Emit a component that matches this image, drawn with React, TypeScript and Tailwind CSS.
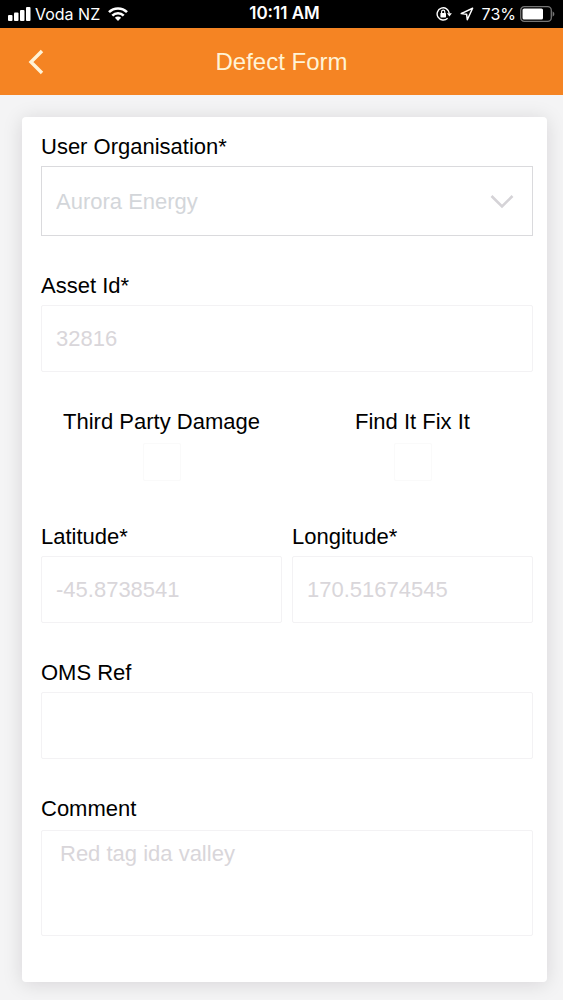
import type { ReactNode } from "react";

const fieldClass =
    "block w-full rounded-xs border border-[#f3f2f4] bg-white px-3.5 text-[22px] text-[#d9d6da] outline-none";

type FieldProps = {
    id: string;
    label: string;
    children: ReactNode;
};

const Field = ({ id, label, children }: FieldProps) => (
    <div className="flex min-w-0 flex-col gap-1">
        <label htmlFor={id} className="text-[22px] leading-[30px] text-black">
            {label}
        </label>
        {children}
    </div>
);

const TextField = ({ id, label, value = "" }: { id: string; label: string; value?: string }) => (
    <Field id={id} label={label}>
        <input id={id} type="text" defaultValue={value} className={`${fieldClass} h-[67px]`} />
    </Field>
);

const CheckField = ({ id, label }: { id: string; label: string }) => (
    <div className="flex flex-col items-center gap-1.5 pb-1.5">
        <label htmlFor={id} className="text-[22px] leading-[30px] text-black">
            {label}
        </label>
        <input
            id={id}
            type="checkbox"
            className="size-[38px] appearance-none rounded-xs border border-[#fafafa] bg-white checked:bg-[#f58423]"
        />
    </div>
);

const StatusBar = () => (
    <div className="grid h-7 grid-cols-[1fr_auto_1fr] items-center bg-black px-2 font-['Inter',sans-serif] text-base text-white">
        <div className="flex items-center gap-1">
            {/* Signal bars */}
            <svg width="23" height="14" viewBox="0 0 23 14" fill="currentColor" aria-hidden="true">
                <rect x="0" y="8" width="4.5" height="6" rx="1" />
                <rect x="6" y="5.5" width="4.5" height="8.5" rx="1" />
                <rect x="12" y="3" width="4.5" height="11" rx="1" />
                <rect x="18" y="0" width="4.5" height="14" rx="1" />
            </svg>
            <span>Voda NZ</span>
            {/* Wifi */}
            <svg className="ml-1" width="20" height="14" viewBox="0 0 20 14" fill="none" stroke="currentColor" strokeWidth="2.6" aria-hidden="true">
                <path d="M1 5.2a12.7 12.7 0 0 1 18 0" />
                <path d="M4.3 8.6a8.1 8.1 0 0 1 11.4 0" />
                <path d="M10 14 6.9 10.8a4.4 4.4 0 0 1 6.2 0z" fill="currentColor" stroke="none" />
            </svg>
        </div>
        <span className="pl-1.5 text-[17px] font-semibold">10:11 AM</span>
        <div className="flex items-center justify-end">
            {/* Rotation lock */}
            <svg width="16" height="16" viewBox="0 0 16 16" fill="none" stroke="currentColor" strokeWidth="1.4" aria-hidden="true">
                <path d="M11.6 12.2A6.1 6.1 0 1 1 13.3 7.400" />
                <path d="M10.900 7.200h5l-2.500 3.200z" fill="currentColor" stroke="none" />
                <rect x="4.4" y="7" width="5.6" height="4.4" rx=".6" fill="currentColor" stroke="none" />
                <path d="M5.6 7.3V5.7a1.6 1.6 0 0 1 3.2 0v1.6" strokeWidth="1.2" />
            </svg>
            {/* Location arrow */}
            <svg className="ml-2" width="14" height="14" viewBox="0 0 14 14" fill="none" stroke="currentColor" strokeWidth="1.5" strokeLinejoin="round" aria-hidden="true">
                <path d="M12.6 1.3 1.2 6.6l5.4.6.7 5.5z" />
            </svg>
            <span className="ml-2">73%</span>
            {/* Battery */}
            <svg className="ml-1" width="35" height="16" viewBox="0 0 35 16" fill="none" aria-hidden="true">
                <rect x=".7" y=".7" width="30.6" height="14.6" rx="3.6" stroke="#757575" strokeWidth="1.3" />
                <rect x="2.5" y="2.5" width="20.5" height="11" rx="1.6" fill="#fff" />
                <path d="M32.6 5.3q1.8.9 1.8 2.7t-1.8 2.7z" fill="#757575" />
            </svg>
        </div>
    </div>
);

const App = () => {
    return (
        <div className="flex min-h-screen flex-col bg-[#f4f4f5] font-['Liberation_Sans',Arial,sans-serif]">
            <StatusBar />

            <header className="grid h-[67px] grid-cols-[1fr_auto_1fr] items-center bg-[#f58423] px-5 text-[#fff3d6]">
                <button type="button" aria-label="Back" className="flex size-8 items-center justify-center">
                    <svg width="16" height="26" viewBox="0 0 16 26" fill="none" stroke="currentColor" strokeWidth="3.4" aria-hidden="true">
                        <path d="M14 2 3 13l11 11" />
                    </svg>
                </button>
                <h1 className="text-2xl leading-8">Defect Form</h1>
            </header>

            <main className="px-4 pt-[22px] pb-[18px] pl-[22px]">
                <form className="flex flex-col gap-[35px] rounded-sm bg-white pt-[15px] pr-3.5 pb-[46px] pl-[19px] shadow-[0_2px_20px_rgba(20,0,20,0.13)]">
                    <Field id="organisation" label="User Organisation*">
                        <div className="relative">
                            <select
                                id="organisation"
                                className="block h-[70px] w-full appearance-none border border-[#dadadd] bg-white px-3.5 text-[22px] text-[#d3d6da] outline-none"
                            >
                                <option>Aurora Energy</option>
                            </select>
                            <svg
                                className="pointer-events-none absolute top-7 right-[19px]"
                                width="24"
                                height="15"
                                viewBox="0 0 24 15"
                                fill="none"
                                stroke="#d5d3d7"
                                strokeWidth="2.6"
                                aria-hidden="true"
                            >
                                <path d="m1.5 2 10.500 10.500L22.500 2" />
                            </svg>
                        </div>
                    </Field>

                    <TextField id="asset" label="Asset Id*" value="32816" />

                    <div className="grid grid-cols-2 gap-2.5">
                        <CheckField id="third-party" label="Third Party Damage" />
                        <CheckField id="find-fix" label="Find It Fix It" />
                    </div>

                    <div className="grid grid-cols-2 gap-2.5">
                        <TextField id="latitude" label="Latitude*" value="-45.8738541" />
                        <TextField id="longitude" label="Longitude*" value="170.51674545" />
                    </div>

                    <TextField id="oms" label="OMS Ref" />

                    <Field id="comment" label="Comment">
                        <textarea
                            id="comment"
                            defaultValue="Red tag ida valley"
                            className={`${fieldClass} mt-0.5 h-[106px] resize-none pt-2 pl-[18px] leading-[30px]`}
                        />
                    </Field>
                </form>
            </main>
        </div>
    );
};

export default App;
